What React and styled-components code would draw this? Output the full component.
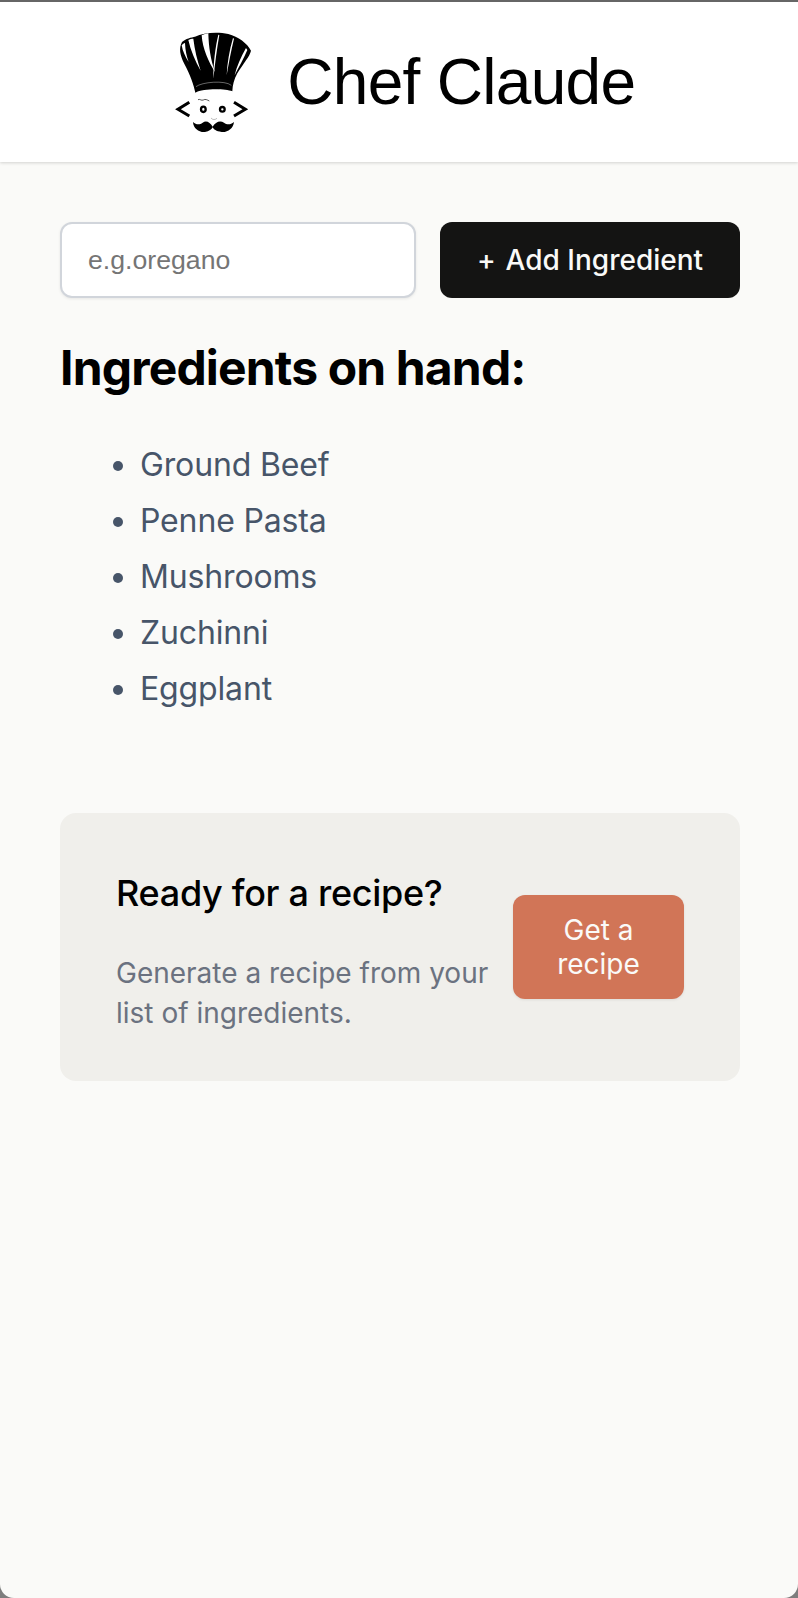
import React from "react";
import styled, { createGlobalStyle } from "styled-components";

const Global = createGlobalStyle`
  html { background: #7d7d7d; }
  body { margin: 0; font-family: Inter, "Liberation Sans", sans-serif; }
`;
const Page = styled.div`
  height: 1598px;
  box-sizing: border-box;
  border-top: 2px solid #666;
  background: #fafaf8;
  border-radius: 0 0 14px 14px;
  overflow: hidden;
`;
const Header = styled.header`
  height: 160px;
  box-sizing: border-box;
  padding-left: 12px;
  background: #fff;
  box-shadow: 0 1px 3px rgba(0,0,0,.16);
  display: flex;
  align-items: center;
  justify-content: center;
  gap: 36px;
`;
const Title = styled.h1`
  margin: 0;
  font: 400 64px "Liberation Sans", Arial, sans-serif;
  letter-spacing: -0.7px;
  color: #000;
`;
const Main = styled.main`
  padding: 60px 58px 0 60px;
`;
const Form = styled.form`
  display: flex;
  gap: 24px;
  height: 76px;
`;
const Input = styled.input`
  flex: 1;
  min-width: 0;
  box-sizing: border-box;
  border: 2px solid #d1d5db;
  border-radius: 12px;
  padding: 0 26px;
  font: 26.67px "Liberation Sans", Arial, sans-serif;
  background: #fff;
  box-shadow: 0 1px 3px rgba(0,0,0,.08);
  &::placeholder { color: #757575; opacity: 1; }
`;
const AddButton = styled.button`
  width: 300px;
  border: 0;
  border-radius: 12px;
  background: #141413;
  color: #fafaf8;
  font: 500 28px Inter, sans-serif;
`;
const Plus = styled.span`
  margin-right: 10px;
`;
const Heading = styled.h2`
  margin: 40px 0 0;
  font-size: 48px;
  font-weight: 700;
  line-height: 60px;
  letter-spacing: -0.85px;
  color: #000;
`;
const List = styled.ul`
  margin: 49px 0 0;
  padding-left: 80px;
  font-size: 32px;
  line-height: 36px;
  letter-spacing: -0.15px;
`;
const Item = styled.li`
  margin-bottom: 20px;
  color: #475569;
`;
const Card = styled.section`
  margin-top: 106px;
  height: 268px;
  box-sizing: border-box;
  background: #f0efeb;
  border-radius: 16px;
  padding: 40px 56px;
  display: flex;
  align-items: center;
  gap: 20px;
`;
const CardText = styled.div`
  flex: 1;
  padding-top: 12px;
`;
const CardTitle = styled.h3`
  margin: 0;
  font-size: 36px;
  font-weight: 500;
  line-height: 40px;
  letter-spacing: -0.3px;
  color: #000;
`;
const CardBody = styled.p`
  margin: 40px 0 0;
  font-size: 28px;
  line-height: 40px;
  color: #6b7280;
`;
const RecipeButton = styled.button`
  width: 171px;
  height: 104px;
  flex: none;
  padding: 0 30px;
  border: 0;
  border-radius: 12px;
  background: #d17557;
  color: #fafaf8;
  font: 400 28px/34px Inter, sans-serif;
  box-shadow: 0 1px 3px rgba(0,0,0,.08);
`;
const LogoSvg = styled.svg`
  width: 76.67px;
  height: 103.33px;
  flex: none;
`;

function Logo() {
  return (
    <LogoSvg viewBox="45 30 230 310" aria-hidden="true">
      <path d="M106 218 C101 195 92 168 72 130 C60 105 56 85 66 66 C76 56 95 52 105 50 C130 38 172 35 205 42 C235 50 262 70 273 92 C270 108 250 130 232 160 C222 178 218 195 217 214 C195 206 130 205 106 218 Z" fill="#000"/>
      <path d="M108 200 C125 186 195 180 214 196" stroke="#fff" strokeWidth="1.2" fill="none"/>
      <path d="M65 76 C68 72 72 70 75 69 C76 92 80 110 86 126 C76 110 68 94 65 76 Z" fill="#fff"/>
      <path d="M85 60 C90 57 95 56 100 56 C104 90 112 122 122 152 C106 124 92 92 85 60 Z" fill="#fff"/>
      <path d="M125 46 C131 43 138 41 145 40 C146 80 152 120 165 156 C146 126 128 88 125 46 Z" fill="#fff"/>
      <path d="M175 44 C166 80 160 130 160 176 C165 130 171 85 178 45 Z" fill="#fff"/>
      <path d="M219 54 C208 90 202 130 200 166 C206 130 214 90 222 56 Z" fill="#fff"/>
      <path d="M258 84 C243 110 230 140 224 166 C236 142 252 114 262 90 Z" fill="#fff"/>
      <path d="M88 247 L54 268 L88 288" stroke="#000" strokeWidth="9" fill="none"/>
      <path d="M222 247 L256 268 L222 288" stroke="#000" strokeWidth="9" fill="none"/>
      <ellipse cx="130" cy="268" rx="7" ry="8" fill="#fff" stroke="#000" strokeWidth="7"/>
      <ellipse cx="187" cy="268" rx="7" ry="7" fill="#fff" stroke="#000" strokeWidth="7"/>
      <path d="M114 239 C120 236 124 243 130 240 C136 236 142 240 148 243" stroke="#000" strokeWidth="2" fill="none"/>
      <path d="M153 294 C158 300 165 300 171 295" stroke="#777" strokeWidth="1.5" fill="none"/>
      <path d="M158 320 C150 306 138 300 128 308 C118 316 108 314 99 306 C100 326 118 338 135 336 C148 334 155 328 158 322 C161 328 168 334 185 336 C202 338 220 326 222 306 C212 314 202 316 192 308 C180 300 166 306 158 320 Z" fill="#000"/>
    </LogoSvg>
  );
}

const ingredients = ["Ground Beef", "Penne Pasta", "Mushrooms", "Zuchinni", "Eggplant"];

export default function App() {
  return (
    <Page>
      <Global />
      <Header>
        <Logo />
        <Title>Chef Claude</Title>
      </Header>
      <Main>
        <Form onSubmit={(e) => e.preventDefault()}>
          <Input placeholder="e.g.oregano" aria-label="Add ingredient" />
          <AddButton><Plus>+</Plus>Add Ingredient</AddButton>
        </Form>
        <Heading>Ingredients on hand:</Heading>
        <List>
          {ingredients.map((i) => <Item key={i}>{i}</Item>)}
        </List>
        <Card>
          <CardText>
            <CardTitle>Ready for a recipe?</CardTitle>
            <CardBody>Generate a recipe from your list of ingredients.</CardBody>
          </CardText>
          <RecipeButton>Get a recipe</RecipeButton>
        </Card>
      </Main>
    </Page>
  );
}
